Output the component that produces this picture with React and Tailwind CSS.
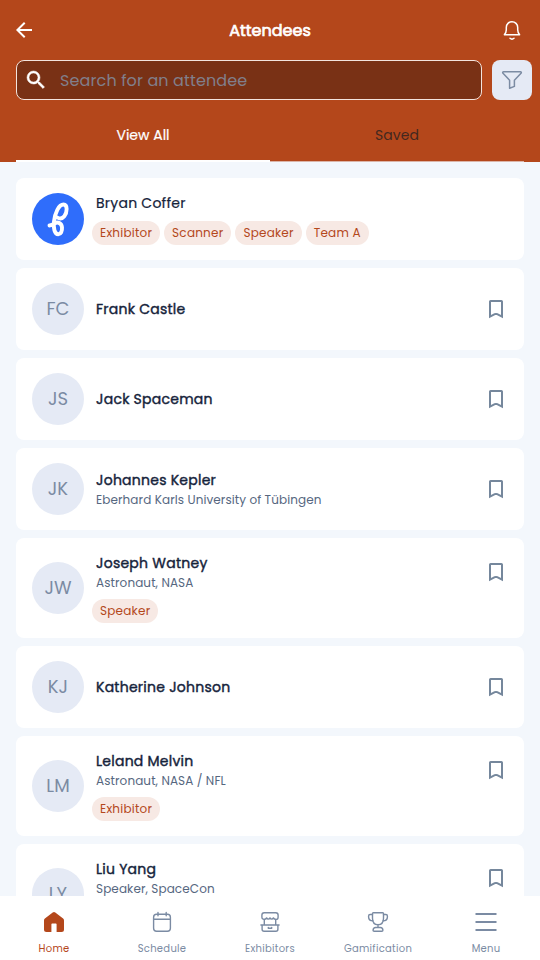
import { useState } from 'react';
import { clsx } from 'clsx';

const attendees = [
  { name: 'Bryan Coffer', logo: true, own: true, tags: ['Exhibitor', 'Scanner', 'Speaker', 'Team A'] },
  { name: 'Frank Castle', initials: 'FC' },
  { name: 'Jack Spaceman', initials: 'JS' },
  { name: 'Johannes Kepler', initials: 'JK', info: 'Eberhard Karls University of Tübingen' },
  { name: 'Joseph Watney', initials: 'JW', info: 'Astronaut, NASA', tags: ['Speaker'] },
  { name: 'Katherine Johnson', initials: 'KJ' },
  { name: 'Leland Melvin', initials: 'LM', info: 'Astronaut, NASA / NFL', tags: ['Exhibitor'] },
  { name: 'Liu Yang', initials: 'LY', info: 'Speaker, SpaceCon', tags: ['Speaker'] },
];

const BackIcon = () => (
  <svg className="h-6 w-6" viewBox="0 0 24 24" fill="currentColor">
    <path d="M20 11H7.83l5.59-5.59L12 4l-8 8 8 8 1.41-1.41L7.83 13H20v-2z" />
  </svg>
);

const BellIcon = () => (
  <svg className="h-6 w-6" viewBox="0 0 24 24" fill="none" stroke="currentColor" strokeWidth="1.5" strokeLinecap="round" strokeLinejoin="round">
    <path d="M4.4 16.8h15.2c-1.2-1.4-1.9-3-1.9-5V9.4a5.7 5.7 0 0 0-11.4 0v2.4c0 2-.7 3.6-1.9 5z" />
    <path d="M10 20.2c1.1 1 2.9 1 4 0" />
  </svg>
);

const SearchIcon = () => (
  <svg className="h-6 w-6 shrink-0" viewBox="0 0 24 24" fill="currentColor" stroke="currentColor" strokeWidth="0.5">
    <path d="M15.5 14h-.79l-.28-.27A6.471 6.471 0 0 0 16 9.5 6.5 6.5 0 1 0 9.5 16c1.61 0 3.09-.59 4.23-1.57l.27.28v.79l5 4.99L20.49 19l-4.99-5zm-6 0C7.01 14 5 11.99 5 9.5S7.01 5 9.5 5 14 7.01 14 9.5 11.99 14 9.5 14z" />
  </svg>
);

const FilterIcon = () => (
  <svg className="h-6 w-6" viewBox="0 0 24 24" fill="none" stroke="currentColor" strokeWidth="1.5" strokeLinejoin="round">
    <path d="M3.6 3.8h16.8c.9 0 1.2.9.6 1.5l-6.600 6.900v6.200l-4.800 1.900v-8.100L3 5.300c-.6-.6-.3-1.500.6-1.500z" />
  </svg>
);

const BookmarkIcon = () => (
  <svg className="h-6 w-6" viewBox="0 0 24 24" fill="none" stroke="currentColor" strokeWidth="2">
    <path d="M6 19.600V4.600c0-.4.200-.6.600-.6h10.800c.4 0 .6.200.6.600v15l-4.800-2.400c-.8-.4-1.600-.4-2.400 0z" />
  </svg>
);

const HomeIcon = () => (
  <svg className="h-6 w-6" viewBox="0 0 24 24" fill="currentColor">
    <path d="M10.700 2.500a2 2 0 0 1 2.600 0l7.800 6.100c.6.5.9 1.100.9 1.800v9.100a2.500 2.500 0 0 1-2.500 2.500h-4.900v-7.800a.8.8 0 0 0-.8-.8h-3.600a.8.8 0 0 0-.8.800V22H4.500A2.500 2.500 0 0 1 2 19.500v-9.100c0-.7.300-1.300.9-1.800z" />
  </svg>
);

const ScheduleIcon = () => (
  <svg className="h-6 w-6" viewBox="0 0 24 24" fill="none" stroke="currentColor" strokeWidth="1.4" strokeLinecap="round">
    <rect x="3.6" y="4.2" width="16.8" height="17" rx="3" />
    <path d="M3.6 9.2h16.8M8 2.500v3.300M16.200 2.500v3.300" />
  </svg>
);

const ExhibitorsIcon = () => (
  <svg className="h-6 w-6" viewBox="0 0 24 24" fill="none" stroke="currentColor" strokeWidth="1.4" strokeLinecap="round" strokeLinejoin="round">
    <path d="M6.200 2.700h11.600c1.500 0 2.300.8 2.300 2.300v2.200c0 1.300-.9 2.200-2.200 2.200-1.200 0-2-.5-2.500-1.500-.3.700-.9 1.200-1.700 1.200s-1.400-.5-1.700-1.200c-.3.700-.9 1.200-1.700 1.200s-1.400-.5-1.700-1.200c-.5 1-1.300 1.500-2.500 1.500-1.300 0-2.200-.9-2.200-2.200V5c0-1.500.8-2.300 2.300-2.300z" />
    <path d="M6.300 9.500v5.400M17.700 9.500v5.400M2.900 15h18.200M4.100 15v4.300c0 1.200.8 2 2 2h11.800c1.200 0 2-.8 2-2V15M10.300 17.400v.8h3.400v-.8" />
  </svg>
);

const TrophyIcon = () => (
  <svg className="h-6 w-6" viewBox="0 0 24 24" fill="none" stroke="currentColor" strokeWidth="1.4" strokeLinecap="round" strokeLinejoin="round">
    <path d="M7.300 2.700h9.400c.5 0 .8.300.8.800v4.700c0 3.900-2 6.500-5.500 6.500s-5.500-2.600-5.500-6.500V3.500c0-.5.300-.8.800-.8zM12 14.700v2.600" />
    <path d="M6.500 4.500H4.100c-1 0-1.500.6-1.500 1.500v1c0 2.400 1.500 3.800 4.300 3.800M17.500 4.500h2.400c1 0 1.500.6 1.500 1.500v1c0 2.400-1.500 3.800-4.300 3.800" />
    <path d="M9.700 17.500h4.600c1.600 0 2.600 1.200 2.600 2.800 0 .6-.4 1-1 1H8.100c-.6 0-1-.4-1-1 0-1.600 1-2.800 2.600-2.800z" />
  </svg>
);

const MenuIcon = () => (
  <svg className="h-6 w-6" viewBox="0 0 24 24" stroke="currentColor" strokeWidth="2">
    <path d="M1.500 4h21M1.500 12h21M1.500 20h21" />
  </svg>
);

const navItems = [
  { label: 'Home', icon: HomeIcon },
  { label: 'Schedule', icon: ScheduleIcon },
  { label: 'Exhibitors', icon: ExhibitorsIcon },
  { label: 'Gamification', icon: TrophyIcon },
  { label: 'Menu', icon: MenuIcon },
];

// White script mark on a blue disc
const LogoAvatar = () => (
  <svg className="h-13 w-13 shrink-0" viewBox="0 0 52 52">
    <circle cx="26" cy="26" r="26" fill="#2f6dfb" />
    <path
      d="M17.500 32.500c2.200-.2 3.800-1.300 5.500-2.300 3.300-1.700 6.700.3 7 4.300.3 3.700-1.200 6.700-3.700 6.700-3.800 0-5-6-4.300-12.700.9-8.500 4.800-17 9.500-17 4.400 0 3.700 8.300.8 11.800-2 2.400-4.800 2.700-7 1.200"
      fill="none"
      stroke="#fff"
      strokeWidth="3.9"
      strokeLinecap="round"
      strokeLinejoin="round"
    />
  </svg>
);

const AttendeeCard = ({ attendee }) => {
  const { name, initials, info, tags, logo, own } = attendee;

  return (
    <div className="flex shrink-0 items-center gap-3 rounded-lg bg-white px-4 py-[15px]">
      {logo ? (
        <LogoAvatar />
      ) : (
        <div className="flex h-13 w-13 shrink-0 items-center justify-center rounded-full bg-[#e5eaf5] text-lg text-[#7b8ba3]">
          {initials}
        </div>
      )}
      <div className={clsx('flex-1', tags && '-mt-px')}>
        <div className="flex items-center justify-between">
          <div>
            <div
              className={clsx(
                'text-sm leading-[22px] tracking-[0.25px] text-[#15233b]',
                own ? '[-webkit-text-stroke:0.2px]' : '[-webkit-text-stroke:0.4px]'
              )}
            >
              {name}
            </div>
            {info && <div className="text-xs leading-[18px] tracking-[0.1px] text-[#56677f]">{info}</div>}
          </div>
          {!own && (
            <button className="text-[#75879c]">
              <BookmarkIcon />
            </button>
          )}
        </div>
        {tags && (
          <div className="mt-[7px] -ml-1 flex gap-1">
            {tags.map((tag) => (
              <span key={tag} className="rounded-full bg-[#f7e9e4] px-2 text-xs leading-6 tracking-[0.22px] text-[#b4481c]">
                {tag}
              </span>
            ))}
          </div>
        )}
      </div>
    </div>
  );
};

const App = () => {
  const [activeTab, setActiveTab] = useState('View All');

  return (
    <div className="flex h-screen flex-col overflow-hidden bg-[#f3f7fc] font-[Poppins,Inter,sans-serif]">
      <header className="h-[162px] shrink-0 bg-[#b4471b] text-white">
        <div className="flex h-15 items-center justify-between pr-4 pl-3">
          <BackIcon />
          <h1 className="pt-px pl-1 text-base [-webkit-text-stroke:0.7px]">Attendees</h1>
          <BellIcon />
        </div>
        <div className="flex gap-2.5 pr-2 pl-4">
          <div className="flex h-10 flex-1 items-center gap-3 rounded-lg border border-[#f3e4de] bg-[#793115] pl-[7px]">
            <SearchIcon />
            <input
              className="w-full bg-transparent pt-0.5 text-base tracking-[0.12px] outline-none placeholder:text-[#817f8b]"
              placeholder="Search for an attendee"
            />
          </div>
          <button className="flex h-10 w-10 items-center justify-center rounded-lg bg-[#e5eaf5] text-[#7b8ba3]">
            <FilterIcon />
          </button>
        </div>
        <div className="mt-2 flex h-[54px] px-4 text-sm">
          {['View All', 'Saved'].map((tab) => (
            <button
              key={tab}
              onClick={() => setActiveTab(tab)}
              className={clsx(
                'flex-1',
                activeTab === tab
                  ? 'border-b-2 border-white pt-0.5 text-white [-webkit-text-stroke:0.2px]'
                  : 'border-b border-[#dcb5a8] tracking-[0.1px] text-[#43281f]'
              )}
            >
              {tab}
            </button>
          ))}
        </div>
      </header>

      <main className="flex flex-1 flex-col gap-2 overflow-hidden px-4 pt-4">
        {attendees.map((attendee) => (
          <AttendeeCard key={attendee.name} attendee={attendee} />
        ))}
      </main>

      <nav className="grid h-16 shrink-0 grid-cols-5 bg-white">
        {navItems.map(({ label, icon: Icon }, index) => (
          <button
            key={label}
            className={clsx('flex flex-col items-center pt-3.5', index === 0 ? 'text-[#b4471b]' : 'text-[#7b8ba3]')}
          >
            <Icon />
            <span className="mt-[7px] text-[10px] leading-4 tracking-[0.28px]">{label}</span>
          </button>
        ))}
      </nav>
    </div>
  );
};

export default App;
